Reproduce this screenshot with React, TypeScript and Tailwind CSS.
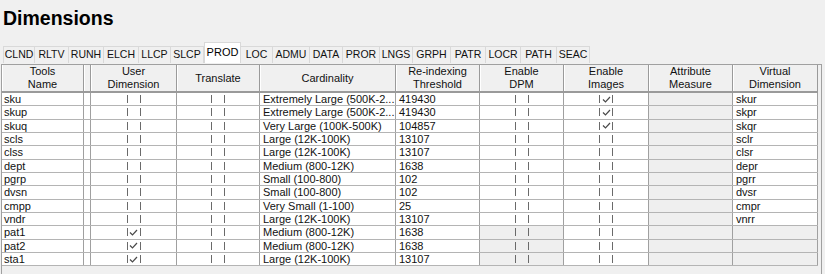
import React from "react";

type Row = {
  name: string;
  userDim: boolean;
  translate: boolean;
  cardinality: string;
  threshold: string;
  dpm: boolean;
  images: boolean;
  virtual: string;
  locked?: boolean;
};

const tabs = [
  { label: "CLND", w: "w-[32px]" },
  { label: "RLTV", w: "w-[34px]" },
  { label: "RUNH", w: "w-[35px]" },
  { label: "ELCH", w: "w-[35px]" },
  { label: "LLCP", w: "w-[32px]" },
  { label: "SLCP", w: "w-[33px]" },
  { label: "PROD", w: "w-[37px]" },
  { label: "LOC", w: "w-[32px]" },
  { label: "ADMU", w: "w-[37px]" },
  { label: "DATA", w: "w-[33px]" },
  { label: "PROR", w: "w-[37px]" },
  { label: "LNGS", w: "w-[33px]" },
  { label: "GRPH", w: "w-[38px]" },
  { label: "PATR", w: "w-[35px]" },
  { label: "LOCR", w: "w-[35px]" },
  { label: "PATH", w: "w-[36px]" },
  { label: "SEAC", w: "w-[33px]" },
];

const rows: Row[] = [
  { name: "sku", userDim: false, translate: false, cardinality: "Extremely Large (500K-2...", threshold: "419430", dpm: false, images: true, virtual: "skur" },
  { name: "skup", userDim: false, translate: false, cardinality: "Extremely Large (500K-2...", threshold: "419430", dpm: false, images: true, virtual: "skpr" },
  { name: "skuq", userDim: false, translate: false, cardinality: "Very Large (100K-500K)", threshold: "104857", dpm: false, images: true, virtual: "skqr" },
  { name: "scls", userDim: false, translate: false, cardinality: "Large (12K-100K)", threshold: "13107", dpm: false, images: false, virtual: "sclr" },
  { name: "clss", userDim: false, translate: false, cardinality: "Large (12K-100K)", threshold: "13107", dpm: false, images: false, virtual: "clsr" },
  { name: "dept", userDim: false, translate: false, cardinality: "Medium (800-12K)", threshold: "1638", dpm: false, images: false, virtual: "depr" },
  { name: "pgrp", userDim: false, translate: false, cardinality: "Small (100-800)", threshold: "102", dpm: false, images: false, virtual: "pgrr" },
  { name: "dvsn", userDim: false, translate: false, cardinality: "Small (100-800)", threshold: "102", dpm: false, images: false, virtual: "dvsr" },
  { name: "cmpp", userDim: false, translate: false, cardinality: "Very Small (1-100)", threshold: "25", dpm: false, images: false, virtual: "cmpr" },
  { name: "vndr", userDim: false, translate: false, cardinality: "Large (12K-100K)", threshold: "13107", dpm: false, images: false, virtual: "vnrr" },
  { name: "pat1", userDim: true, translate: false, cardinality: "Medium (800-12K)", threshold: "1638", dpm: false, images: false, virtual: "", locked: true },
  { name: "pat2", userDim: true, translate: false, cardinality: "Medium (800-12K)", threshold: "1638", dpm: false, images: false, virtual: "", locked: true },
  { name: "sta1", userDim: true, translate: false, cardinality: "Large (12K-100K)", threshold: "13107", dpm: false, images: false, virtual: "", locked: true },
];

// the grid draws its check boxes as two thin bars, with a tick when set
function Check({ on }: { on: boolean }) {
  return (
    <span className="flex h-[8px] w-[14px] items-center justify-center border-x-[1.5px] border-[#6a6a6a]">
      {on && (
        <svg width="9" height="7" viewBox="0 0 9 7">
          <path d="M1 3.5 L3.5 6 L8 1" fill="none" stroke="#4a4a4a" strokeWidth="1.2" />
        </svg>
      )}
    </span>
  );
}

function HeadCell({ w, children }: { w: string; children?: React.ReactNode }) {
  return (
    <div
      className={`${w} flex h-full shrink-0 flex-col items-center justify-center border-r border-[#9a9a9a] text-center leading-[13px] shadow-[inset_1px_0_0_#ffffff]`}
    >
      {children}
    </div>
  );
}

export default function App() {
  return (
    <div className="h-[274px] w-[825px] overflow-hidden bg-[#f0f0f0] font-['Liberation_Sans',Arial,sans-serif] text-[11px] text-[#111]">
      <h1 className="h-[29px] pl-[3px] pt-[7px] text-[19.5px] font-bold leading-[22px] text-black">
        Dimensions
      </h1>

      <div className="mt-[13px] flex h-[21px] items-end pl-[3px]">
        {tabs.map((t) =>
          t.label === "PROD" ? (
            <div
              key={t.label}
              className={`${t.w} flex h-[21px] items-center justify-center border-x border-t border-[#d9d9d9] bg-white pb-[2px] text-[11px] text-black`}
            >
              {t.label}
            </div>
          ) : (
            <div
              key={t.label}
              className={`${t.w} flex h-[17px] items-center justify-center border-r border-t border-[#d9d9d9] bg-[#f0f0f0] text-[10.5px] text-[#111] first:border-l`}
            >
              {t.label}
            </div>
          )
        )}
      </div>

      <div className="ml-[1px] mt-[1px] h-[212px] w-[821px] border-l border-r border-t border-[#a0a0a0] bg-[#f0f0f0]">
        <div className="flex h-[28px] w-[816px] border-b-2 border-[#9a9a9a] bg-[#f0f0f0] text-[#111]">
          <HeadCell w="w-[82px]">
            <span>Tools</span>
            <span>Name</span>
          </HeadCell>
          <HeadCell w="w-[7px]" />
          <HeadCell w="w-[86px]">
            <span>User</span>
            <span>Dimension</span>
          </HeadCell>
          <HeadCell w="w-[83px]">Translate</HeadCell>
          <HeadCell w="w-[136px]">Cardinality</HeadCell>
          <HeadCell w="w-[84px]">
            <span>Re-indexing</span>
            <span>Threshold</span>
          </HeadCell>
          <HeadCell w="w-[84px]">
            <span>Enable</span>
            <span>DPM</span>
          </HeadCell>
          <HeadCell w="w-[85px]">
            <span>Enable</span>
            <span>Images</span>
          </HeadCell>
          <HeadCell w="w-[84px]">
            <span>Attribute</span>
            <span>Measure</span>
          </HeadCell>
          <HeadCell w="w-[85px]">
            <span>Virtual</span>
            <span>Dimension</span>
          </HeadCell>
        </div>

        {rows.map((r) => (
          <div key={r.name} className="flex h-[13.33px] w-[816px] border-b border-[#b4b4b4] leading-[12px]">
            <div className="w-[82px] shrink-0 border-r border-[#a0a0a0] bg-white pl-[2px]">{r.name}</div>
            <div className="w-[7px] shrink-0 border-r border-[#a0a0a0] bg-white" />
            <div className="flex w-[86px] shrink-0 items-center justify-center border-r border-[#a0a0a0] bg-white">
              <Check on={r.userDim} />
            </div>
            <div className="flex w-[83px] shrink-0 items-center justify-center border-r border-[#a0a0a0] bg-white">
              <Check on={r.translate} />
            </div>
            <div className="w-[136px] shrink-0 overflow-hidden whitespace-nowrap border-r border-[#a0a0a0] bg-white pl-[3px]">
              {r.cardinality}
            </div>
            <div className="w-[84px] shrink-0 border-r border-[#a0a0a0] bg-white pl-[3px]">{r.threshold}</div>
            <div
              className={`flex w-[84px] shrink-0 items-center justify-center border-r border-[#a0a0a0] ${
                r.locked ? "bg-[#efefef]" : "bg-white"
              }`}
            >
              <Check on={r.dpm} />
            </div>
            <div className="flex w-[85px] shrink-0 items-center justify-center border-r border-[#a0a0a0] bg-white">
              <Check on={r.images} />
            </div>
            <div className="w-[84px] shrink-0 border-r border-[#a0a0a0] bg-[#efefef]" />
            <div
              className={`w-[85px] shrink-0 border-r border-[#a0a0a0] pl-[3px] ${
                r.locked ? "bg-[#efefef]" : "bg-white"
              }`}
            >
              {r.virtual}
            </div>
          </div>
        ))}
      </div>
    </div>
  );
}
